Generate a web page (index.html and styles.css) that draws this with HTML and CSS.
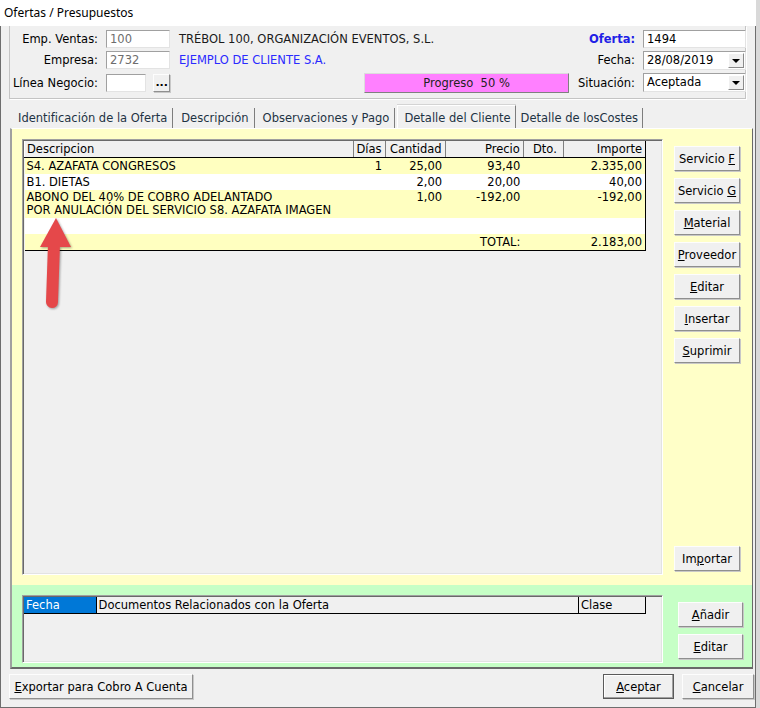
FILE: index.html
```html
<!DOCTYPE html>
<html lang="es">

<head>
  <meta charset="UTF-8">
  <meta name="viewport" content="width=device-width, initial-scale=1.0">
  <title>Ofertas / Presupuestos</title>
  <link rel="stylesheet" href="styles.css">
</head>

<body>
  <div class="window">
    <div class="titlebar">Ofertas / Presupuestos</div>

    <!-- cabecera de la oferta -->
    <div class="header">
      <span class="lbl">Emp. Ventas:</span>
      <div class="field dis">100</div>
      <div class="info">TRÉBOL 100, ORGANIZACIÓN EVENTOS, S.L.</div>
      <span class="lbl blue">Oferta:</span>
      <div class="field">1494</div>

      <span class="lbl">Empresa:</span>
      <div class="field dis">2732</div>
      <div class="info client">EJEMPLO DE CLIENTE S.A.</div>
      <span class="lbl">Fecha:</span>
      <div class="field combo">28/08/2019<span class="drop"></span></div>

      <span class="lbl row3">Línea Negocio:</span>
      <div class="linea row3">
        <div class="field short"></div>
        <button class="btn dots">...</button>
      </div>
      <div class="info row3">
        <div class="progress">Progreso&nbsp; 50 %</div>
      </div>
      <span class="lbl row3">Situación:</span>
      <div class="field combo row3">Aceptada<span class="drop"></span></div>
    </div>

    <!-- pestañas -->
    <div class="tabs">
      <div class="tab first">Identificación de la Oferta</div>
      <div class="tab">Descripción</div>
      <div class="tab">Observaciones y Pago</div>
      <div class="tab active">Detalle del Cliente</div>
      <div class="tab lastTab">Detalle de losCostes</div>
    </div>

    <div class="tabPanel">
      <div class="detailWrap">
        <div class="grid">
          <table class="lines">
            <colgroup>
              <col style="width:328px">
              <col style="width:32px">
              <col style="width:60px">
              <col style="width:78px">
              <col style="width:40px">
              <col style="width:82px">
            </colgroup>
            <tr>
              <th class="left">Descripcion</th>
              <th>Días</th>
              <th>Cantidad</th>
              <th>Precio</th>
              <th class="dto">Dto.</th>
              <th>Importe</th>
            </tr>
            <tr class="odd">
              <td class="left">S4. AZAFATA CONGRESOS</td>
              <td>1</td>
              <td>25,00</td>
              <td>93,40</td>
              <td></td>
              <td>2.335,00</td>
            </tr>
            <tr>
              <td class="left">B1. DIETAS</td>
              <td></td>
              <td>2,00</td>
              <td>20,00</td>
              <td></td>
              <td>40,00</td>
            </tr>
            <tr class="odd double">
              <td class="left">ABONO DEL 40% DE COBRO ADELANTADO<br>POR ANULACIÓN DEL SERVICIO S8. AZAFATA IMAGEN</td>
              <td></td>
              <td>1,00</td>
              <td>-192,00</td>
              <td></td>
              <td>-192,00</td>
            </tr>
            <tr>
              <td class="left"></td>
              <td></td>
              <td></td>
              <td></td>
              <td></td>
              <td></td>
            </tr>
            <tr class="odd total">
              <td class="left"></td>
              <td></td>
              <td></td>
              <td>TOTAL:</td>
              <td></td>
              <td>2.183,00</td>
            </tr>
          </table>
        </div>
        <div class="side">
          <button class="btn">Servicio <u>F</u></button>
          <button class="btn">Servicio <u>G</u></button>
          <button class="btn"><u>M</u>aterial</button>
          <button class="btn"><u>P</u>roveedor</button>
          <button class="btn"><u>E</u>ditar</button>
          <button class="btn"><u>I</u>nsertar</button>
          <button class="btn"><u>S</u>uprimir</button>
          <button class="btn last">Im<u>p</u>ortar</button>
        </div>
      </div>

      <div class="docsWrap">
        <div class="grid docs">
          <table class="lines">
            <colgroup>
              <col style="width:72px">
              <col style="width:482px">
              <col style="width:67px">
            </colgroup>
            <tr>
              <th class="left sel">Fecha</th>
              <th class="left">Documentos Relacionados con la Oferta</th>
              <th class="left">Clase</th>
            </tr>
          </table>
        </div>
        <div class="side">
          <button class="btn"><u>A</u>ñadir</button>
          <button class="btn"><u>E</u>ditar</button>
        </div>
      </div>
    </div>

    <div class="footer">
      <button class="btn export"><u>E</u>xportar para Cobro A Cuenta</button>
      <button class="btn ok"><u>A</u>ceptar</button>
      <button class="btn cancel"><u>C</u>ancelar</button>
    </div>

    <!-- flecha de señalización -->
    <svg class="arrow" width="50" height="104" viewBox="0 0 50 104">
      <line x1="24" y1="34" x2="22" y2="92" stroke="#e5484a" stroke-width="12" stroke-linecap="round" />
      <polygon points="26,8 10,37 41,37" fill="#e5484a" />
    </svg>
  </div>
</body>

</html>
```

FILE: styles.css
```css
* {
  box-sizing: border-box;
}

body {
  margin: 0;
  background-color: #d9d9d9;
  font-family: "DejaVu Sans", Verdana, sans-serif;
  font-size: 11.5px;
  color: #000;
}

.window {
  position: relative;
  width: 756px;
  height: 708px;
  background-color: #f0f0f0;
  border: 1px solid #6e6e6e;
  border-top: none;
  display: flex;
  flex-direction: column;
}

.titlebar {
  height: 26px;
  line-height: 25px;
  padding-left: 4px;
  background-color: #fff;
  font-family: "Noto Sans", "Open Sans", sans-serif;
  font-size: 12px;
  margin: 0 -1px;
}

/* cabecera */
.header {
  margin-left: 8px;
  width: 737px;
  height: 73px;
  padding: 4px 0 0 1px;
  border: 1px solid #c4c4c4;
  border-top: none;
  box-shadow: 1px 1px 0 #fff;
  display: grid;
  grid-template-columns: 87px 64px 385px 64px 103px;
  grid-template-rows: 18px 18px 19px;
  row-gap: 3px;
  column-gap: 8px;
  align-items: center;
}

.header .row3 {
  margin-top: 2px;
}

.lbl {
  text-align: right;
  white-space: nowrap;
}

.blue {
  color: #1f1fe6;
  font-weight: bold;
}

.field {
  position: relative;
  height: 18px;
  line-height: 16px;
  padding-left: 3px;
  background-color: #fff;
  border: 1px solid;
  border-color: #a0a0a0 #e3e3e3 #e3e3e3 #a0a0a0;
}

.field.dis {
  color: #6d6d6d;
}

.field.short {
  width: 41px;
}

.combo {
  height: 19px;
  line-height: 17px;
}

.drop {
  position: absolute;
  right: 1px;
  top: 1px;
  width: 16px;
  height: 15px;
  background-color: #f0f0f0;
  border: 1px solid;
  border-color: #fff #8a8a8a #8a8a8a #fff;
}

.drop::after {
  content: "";
  position: absolute;
  left: 3px;
  top: 5px;
  border-left: 4px solid transparent;
  border-right: 4px solid transparent;
  border-top: 4px solid #000;
}

.info {
  padding-left: 1px;
  white-space: nowrap;
  color: #1a1a1a;
}

.client {
  color: #2a2aff;
}

.linea {
  display: flex;
  gap: 7px;
  height: 18px;
}

.progress {
  margin-left: 185px;
  width: 205px;
  height: 20px;
  line-height: 18px;
  text-align: center;
  background-color: #ff80ff;
  border: 1px solid;
  border-color: #dcdcdc #808080 #808080 #dcdcdc;
  color: #222;
}

/* botones */
.btn {
  font-family: inherit;
  font-size: 11.5px;
  color: #000;
  background-color: #f0f0f0;
  border: 1px solid;
  border-color: #fdfdfd #8f8f8f #8f8f8f #fdfdfd;
  box-shadow: 1px 1px 0 #c8c8c8;
  padding: 0;
  height: 25px;
  cursor: pointer;
}

.btn.dots {
  width: 17px;
  height: 18px;
  line-height: 10px;
  font-weight: bold;
  font-size: 11px;
}

/* pestañas */
.tabs {
  height: 29px;
  display: flex;
  align-items: flex-end;
  padding-left: 11px;
}

.tab {
  height: 20px;
  line-height: 21px;
  padding: 0 5px 0 8px;
  border-right: 1px solid #7d7d7d;
  color: #1e3344;
  white-space: nowrap;
}

.tab.first {
  padding-left: 6px;
}

.tab.active {
  height: 23px;
  line-height: 25px;
  margin-left: 2px;
  padding: 0 4px 0 6px;
  border-top: 1px solid #fff;
  border-left: 1px solid #fff;
  box-shadow: 0 -1px 0 #d4d4d4;
}

.tab.lastTab {
  padding: 0 4px 0 5px;
}

.tabPanel {
  margin-left: 9px;
  width: 743px;
  border: 1px solid;
  border-color: #fff #696969 #696969 #a0a0a0;
  border-left-width: 2px;
  border-bottom-width: 2px;
}

.detailWrap {
  display: flex;
  height: 456px;
  padding: 10px 11px 10px 10px;
  background-color: #ffffc8;
}

.docsWrap {
  display: flex;
  height: 82px;
  padding: 10px 8px 4px 10px;
  background-color: #c6ffc6;
}

.grid {
  width: 641px;
  flex: none;
  padding: 1px;
  background-color: #f0f0f0;
  border: 1px solid;
  border-color: #a0a0a0 #fff #fff #a0a0a0;
  box-shadow: inset 1px 1px 0 #696969, inset -1px -1px 0 #e3e3e3;
}

.lines {
  border-collapse: collapse;
  table-layout: fixed;
  width: 622px;
}

.lines th {
  height: 16px;
  line-height: 14px;
  padding: 0 3px 0 2px;
  font-weight: normal;
  text-align: right;
  background-color: #f0f0f0;
  border-left: 1px solid #fff;
  border-right: 1px solid #808080;
  border-bottom: 1px solid #000;
  white-space: nowrap;
}

.lines th.dto {
  padding-right: 6px;
}

.lines td {
  height: 16px;
  line-height: 16px;
  padding: 0 3px 0 2px;
  text-align: right;
  background-color: #fff;
  white-space: nowrap;
}

.lines .left {
  text-align: left;
  padding-left: 2px;
}

.lines tr.odd td {
  background-color: #ffffc0;
}

.lines tr.double td {
  height: 28px;
  line-height: 13px;
  vertical-align: top;
  padding-top: 1px;
}

.lines td:last-child,
.lines th:last-child {
  border-right: 1px solid #000;
}

.lines tr.total td {
  border-bottom: 1px solid #000;
}

.docs .lines th {
  border-left: none;
  border-right: 1px solid #000;
}

.docs .lines th.sel {
  background-color: #0078d7;
  color: #fff;
}

.side {
  display: flex;
  flex-direction: column;
  gap: 7px;
  padding-top: 7px;
  padding-bottom: 4px;
  margin-left: 11px;
  width: 66px;
}

.docsWrap .side {
  margin-left: 15px;
  width: 65px;
}

.side .last {
  margin-top: auto;
}

/* pie */
.footer {
  flex: 1;
  display: flex;
  align-items: flex-start;
  padding: 5px 1px 0 8px;
  gap: 8px;
}

.btn.export {
  width: 184px;
  margin-right: auto;
}

.btn.ok {
  width: 71px;
  border: 1px solid #5a5a5a;
  box-shadow: inset -1px -1px 0 #a0a0a0, inset 1px 1px 0 #fff;
}

.btn.cancel {
  width: 72px;
}

.arrow {
  position: absolute;
  left: 29px;
  top: 210px;
  filter: drop-shadow(1px 1px 1px rgba(0, 0, 0, 0.35));
}
```
